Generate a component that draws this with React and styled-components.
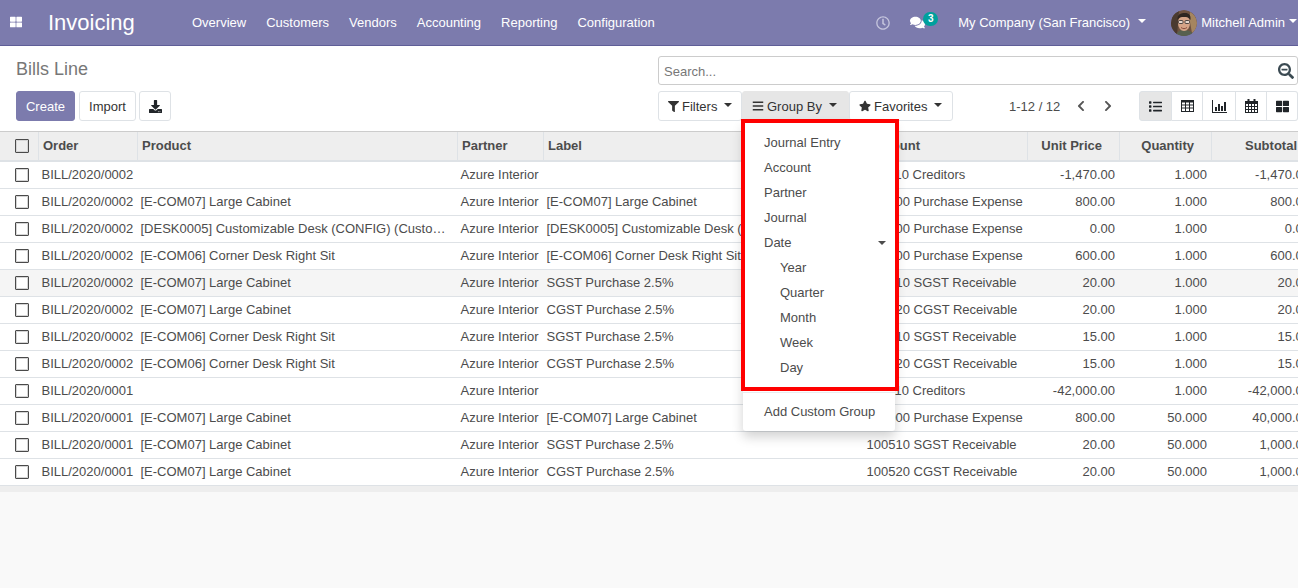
import React from "react";
import styled, { createGlobalStyle } from "styled-components";
import {
  FaThLarge,
  FaRegClock,
  FaComments,
  FaDownload,
  FaSearchMinus,
  FaFilter,
  FaBars,
  FaStar,
  FaChevronLeft,
  FaChevronRight,
  FaList,
} from "react-icons/fa";

const navLinks = ["Overview", "Customers", "Vendors", "Accounting", "Reporting", "Configuration"];
const dateOptions = ["Year", "Quarter", "Month", "Week", "Day"];

const columns = [
  { key: "check", width: 38 },
  { key: "order", width: 99, label: "Order" },
  { key: "product", width: 320, label: "Product" },
  { key: "partner", width: 86, label: "Partner" },
  { key: "label", width: 320, label: "Label" },
  { key: "account", width: 164, label: "Account" },
  { key: "price", width: 92, label: "Unit Price", right: true },
  { key: "qty", width: 92, label: "Quantity", right: true },
  { key: "subtotal", width: 103, label: "Subtotal", right: true },
];

const CABINET = "[E-COM07] Large Cabinet";
const DESK = "[DESK0005] Customizable Desk (CONFIG) (Custom, White)";
const CORNER = "[E-COM06] Corner Desk Right Sit";

const rows = [
  ["BILL/2020/0002", "", "", "211010 Creditors", "-1,470.00", "1.000", "-1,470.00"],
  ["BILL/2020/0002", CABINET, CABINET, "600000 Purchase Expense", "800.00", "1.000", "800.00"],
  ["BILL/2020/0002", DESK, DESK, "600000 Purchase Expense", "0.00", "1.000", "0.00"],
  ["BILL/2020/0002", CORNER, CORNER, "600000 Purchase Expense", "600.00", "1.000", "600.00"],
  ["BILL/2020/0002", CABINET, "SGST Purchase 2.5%", "100510 SGST Receivable", "20.00", "1.000", "20.00"],
  ["BILL/2020/0002", CABINET, "CGST Purchase 2.5%", "100520 CGST Receivable", "20.00", "1.000", "20.00"],
  ["BILL/2020/0002", CORNER, "SGST Purchase 2.5%", "100510 SGST Receivable", "15.00", "1.000", "15.00"],
  ["BILL/2020/0002", CORNER, "CGST Purchase 2.5%", "100520 CGST Receivable", "15.00", "1.000", "15.00"],
  ["BILL/2020/0001", "", "", "211010 Creditors", "-42,000.00", "1.000", "-42,000.00"],
  ["BILL/2020/0001", CABINET, CABINET, "600000 Purchase Expense", "800.00", "50.000", "40,000.00"],
  ["BILL/2020/0001", CABINET, "SGST Purchase 2.5%", "100510 SGST Receivable", "20.00", "50.000", "1,000.00"],
  ["BILL/2020/0001", CABINET, "CGST Purchase 2.5%", "100520 CGST Receivable", "20.00", "50.000", "1,000.00"],
];

const Avatar = () => (
  <AvatarFrame viewBox="0 0 26 26">
    <circle cx="13" cy="13" r="13" fill="#6f5240" />
    <path d="M0 13A13 13 0 0 1 8 1L6 26A13 13 0 0 1 0 13Z" fill="#4a3a30" />
    <path d="M19 2A13 13 0 0 1 26 13A13 13 0 0 1 21 23L19 12Z" fill="#a5855f" />
    <path d="M5 26c1-5 4-6 8-6s7 1 9 4a13 13 0 0 1-17 2Z" fill="#57604f" />
    <ellipse cx="13" cy="13" rx="6" ry="8" fill="#d6a488" />
    <path d="M6.500 10C6 4 10 3 14 3s6 2 5.500 7C18 7.500 16 7 13 7s-5 .5-6.500 3Z" fill="#2f2621" />
    <rect x="7.500" y="10.500" width="4.500" height="3" rx="1" fill="#e8d8ce" stroke="#2c2a2a" strokeWidth=".8" />
    <rect x="14" y="10.500" width="4.500" height="3" rx="1" fill="#e8d8ce" stroke="#2c2a2a" strokeWidth=".8" />
    <path d="M10 17.500c2 1.500 4 1.500 6 0" fill="none" stroke="#8c4f3f" strokeWidth="1" />
  </AvatarFrame>
);

const TableIcon = () => (
  <svg width="13" height="12" viewBox="0 0 13 12" fill="none" stroke="#212529">
    <rect x=".5" y=".5" width="12" height="11" />
    <rect x="0" y="0" width="13" height="2.500" fill="#212529" stroke="none" />
    <path d="M0 5h13M0 8h13M4.500 2v9M8.500 2v9" />
  </svg>
);

const ChartIcon = () => (
  <svg width="15" height="13" viewBox="0 0 15 13" fill="#212529">
    <rect x="0" y="0" width="1" height="13" />
    <rect x="0" y="12" width="15" height="1" />
    <rect x="3" y="7" width="2" height="4" />
    <rect x="6" y="4" width="2" height="7" />
    <rect x="9" y="6" width="2" height="5" />
    <rect x="12" y="2" width="2" height="9" />
  </svg>
);

const CalendarIcon = () => (
  <svg width="13" height="14" viewBox="0 0 13 14" fill="none" stroke="#212529">
    <rect x=".5" y="2.500" width="12" height="11" />
    <rect x="0" y="2" width="13" height="3" fill="#212529" stroke="none" />
    <rect x="2.500" y="0" width="2" height="3.500" fill="#212529" stroke="none" />
    <rect x="8.500" y="0" width="2" height="3.500" fill="#212529" stroke="none" />
    <path d="M0 7.500h13M0 10.500h13M3.500 5v8M6.500 5v8M9.500 5v8" />
  </svg>
);

const App = () => {
  return (
    <Page>
      <GlobalStyle />
      <Navbar>
        <AppsButton>
          <FaThLarge size={12} />
        </AppsButton>
        <Brand>Invoicing</Brand>
        <NavMenu>
          {navLinks.map((link) => (
            <NavLink key={link}>{link}</NavLink>
          ))}
        </NavMenu>
        <NavRight>
          <ClockItem>
            <FaRegClock size={14} />
          </ClockItem>
          <MessagesItem>
            <FaComments size={15} />
            <Badge>3</Badge>
          </MessagesItem>
          <CompanyItem>
            My Company (San Francisco)
            <Caret $light />
          </CompanyItem>
          <UserItem>
            <Avatar />
            Mitchell Admin
            <Caret $light />
          </UserItem>
        </NavRight>
      </Navbar>

      <ControlPanel>
        <PanelLeft>
          <Title>Bills Line</Title>
          <ButtonRow>
            <PrimaryButton>Create</PrimaryButton>
            <PlainButton>Import</PlainButton>
            <IconButton>
              <FaDownload size={13} />
            </IconButton>
          </ButtonRow>
        </PanelLeft>
        <PanelRight>
          <SearchBar>
            <SearchInput placeholder="Search..." />
            <SearchIcon>
              <FaSearchMinus size={16} />
            </SearchIcon>
          </SearchBar>
          <OptionsRow>
            <FilterGroup>
              <FilterButton $width={84}>
                <FaFilter size={11} />
                Filters
                <Caret />
              </FilterButton>
              <GroupByWrap>
                <FilterButton $active $width={107}>
                  <FaBars size={12} />
                  Group By
                  <Caret />
                </FilterButton>
                <Dropdown>
                  <MenuItem>Journal Entry</MenuItem>
                  <MenuItem>Account</MenuItem>
                  <MenuItem>Partner</MenuItem>
                  <MenuItem>Journal</MenuItem>
                  <MenuItem>
                    Date
                    <MenuCaret />
                  </MenuItem>
                  {dateOptions.map((option) => (
                    <MenuItem key={option} $sub>
                      {option}
                    </MenuItem>
                  ))}
                  <MenuDivider />
                  <MenuItem>Add Custom Group</MenuItem>
                  <RedFrame />
                </Dropdown>
              </GroupByWrap>
              <FilterButton $width={104}>
                <FaStar size={12} />
                Favorites
                <Caret />
              </FilterButton>
            </FilterGroup>
            <Pager>
              <PagerText>1-12 / 12</PagerText>
              <PagerArrow>
                <FaChevronLeft size={12} />
              </PagerArrow>
              <PagerArrow>
                <FaChevronRight size={12} />
              </PagerArrow>
            </Pager>
            <ViewSwitcher>
              <ViewButton $active $width={33}>
                <FaList size={13} />
              </ViewButton>
              <ViewButton $width={31}>
                <TableIcon />
              </ViewButton>
              <ViewButton $width={33}>
                <ChartIcon />
              </ViewButton>
              <ViewButton $width={31}>
                <CalendarIcon />
              </ViewButton>
              <ViewButton $width={31}>
                <FaThLarge size={13} />
              </ViewButton>
            </ViewSwitcher>
          </OptionsRow>
        </PanelRight>
      </ControlPanel>

      <TableWrap>
        <BillsTable>
          <colgroup>
            {columns.map((col) => (
              <col key={col.key} width={col.width} />
            ))}
          </colgroup>
          <thead>
            <tr>
              <HeadCheck>
                <CheckBox $head />
              </HeadCheck>
              {columns.slice(1).map((col) => (
                <HeadCell key={col.key} $right={col.right}>
                  {col.label}
                </HeadCell>
              ))}
            </tr>
          </thead>
          <tbody>
            {rows.map((row, key) => (
              <BodyRow key={key} $hover={key === 4}>
                <CheckCell>
                  <CheckBox />
                </CheckCell>
                <Cell>{row[0]}</Cell>
                <Cell>{row[1]}</Cell>
                <Cell>Azure Interior</Cell>
                <Cell>{row[2]}</Cell>
                <Cell>{row[3]}</Cell>
                <Cell $right>{row[4]}</Cell>
                <Cell $right>{row[5]}</Cell>
                <Cell $right>{row[6]}</Cell>
              </BodyRow>
            ))}
          </tbody>
        </BillsTable>
        <TableFooter />
      </TableWrap>
    </Page>
  );
};

export default App;

const GlobalStyle = createGlobalStyle`
  html, body {
    margin: 0;
    height: 100%;
    overflow: hidden;
    background: #f9f9f9;
  }
  * {
    box-sizing: border-box;
  }
`;

const Page = styled.div`
  min-height: 588px;
  font-family: "Liberation Sans", Arial, sans-serif;
  font-size: 13px;
  color: #4c4c4c;
  background: #f9f9f9;
  overflow: hidden;
`;

const Navbar = styled.header`
  display: flex;
  align-items: center;
  height: 46px;
  background: #7c7bad;
  border-bottom: 1px solid #5f5e97;
  color: #fff;
`;

const AppsButton = styled.div`
  display: flex;
  width: 48px;
  padding-left: 10px;
  padding-bottom: 2px;
`;

const Brand = styled.div`
  width: 134px;
  font-size: 22px;
  line-height: 44px;
`;

const NavMenu = styled.nav`
  display: flex;
  gap: 20px;
  padding-left: 10px;
`;

const NavLink = styled.a`
  color: #fff;
`;

const NavRight = styled.div`
  display: flex;
  align-items: center;
  margin-left: auto;
  height: 100%;
`;

const ClockItem = styled.div`
  display: flex;
  color: #c5c5dd;
  margin-right: 20px;
`;

const MessagesItem = styled.div`
  position: relative;
  display: flex;
  width: 48px;
`;

const Badge = styled.span`
  position: absolute;
  top: -3px;
  left: 13px;
  width: 15px;
  height: 14px;
  border-radius: 8px;
  background: #00a09d;
  font-size: 10px;
  font-weight: bold;
  line-height: 14px;
  text-align: center;
`;

const CompanyItem = styled.div`
  display: flex;
  align-items: center;
  gap: 8px;
  margin-right: 25px;
`;

const UserItem = styled.div`
  display: flex;
  align-items: center;
  gap: 4px;
  margin-right: 1px;
`;

const AvatarFrame = styled.svg`
  width: 26px;
  height: 26px;
  border-radius: 50%;
`;

const Caret = styled.span`
  display: inline-block;
  width: 0;
  height: 0;
  margin-top: -3px;
  border-top: 4px solid ${(p) => (p.$light ? "#fff" : "#333")};
  border-left: 4px solid transparent;
  border-right: 4px solid transparent;
`;

const ControlPanel = styled.section`
  display: flex;
  height: 86px;
  background: #fff;
  border-bottom: 1px solid #ccc;
`;

const PanelLeft = styled.div`
  width: 658px;
  padding: 12px 0 0 16px;
`;

const Title = styled.h1`
  margin: 0 0 11px;
  font-size: 18px;
  font-weight: normal;
  line-height: 22px;
  color: #777;
`;

const ButtonRow = styled.div`
  display: flex;
`;

const PlainButton = styled.button`
  height: 30px;
  width: 57px;
  margin-left: 4px;
  padding: 0;
  border: 1px solid #dee2e6;
  border-radius: 3px;
  background: #fff;
  color: #333;
  font: 13px "Liberation Sans", Arial, sans-serif;
`;

const PrimaryButton = styled(PlainButton)`
  width: 59px;
  margin-left: 0;
  background: #7c7bad;
  border-color: #7c7bad;
  color: #fff;
`;

const IconButton = styled(PlainButton)`
  display: flex;
  align-items: center;
  justify-content: center;
  width: 32px;
  margin-left: 3px;
  color: #212529;
`;

const PanelRight = styled.div`
  flex: 1;
  padding-top: 10px;
`;

const SearchBar = styled.div`
  display: flex;
  align-items: center;
  height: 29px;
  border: 1px solid #ccc;
  border-radius: 3px;
`;

const SearchInput = styled.input`
  flex: 1;
  min-width: 0;
  height: 100%;
  padding: 1px 5px 0;
  border: 0;
  outline: 0;
  background: transparent;
  font: 13px "Liberation Sans", Arial, sans-serif;
  &::placeholder {
    color: #777;
  }
`;

const SearchIcon = styled.span`
  display: flex;
  padding: 1px 3px 0 0;
  color: #3b4a52;
`;

const OptionsRow = styled.div`
  display: flex;
  align-items: center;
  margin-top: 6px;
`;

const FilterGroup = styled.div`
  display: flex;
  width: 351px;
`;

const GroupByWrap = styled.div`
  position: relative;
`;

const FilterButton = styled.button`
  display: flex;
  align-items: center;
  gap: 3px;
  width: ${(p) => p.$width}px;
  height: 30px;
  padding: 0 0 0 9px;
  border: 1px solid ${(p) => (p.$active ? "#e6e6e6" : "#dee2e6")};
  border-radius: 3px;
  background: ${(p) => (p.$active ? "#e6e6e6" : "#fff")};
  color: #333;
  font: 13px "Liberation Sans", Arial, sans-serif;
  & > span {
    margin-left: 4px;
  }
`;

const Dropdown = styled.div`
  position: absolute;
  z-index: 5;
  top: 100%;
  left: 1px;
  width: 152px;
  height: 310px;
  padding-top: 9px;
  background: #fff;
  border-radius: 0 0 3px 3px;
  box-shadow: 0 6px 12px rgba(0, 0, 0, 0.18);
`;

const MenuItem = styled.div`
  position: relative;
  height: 25px;
  padding-left: ${(p) => (p.$sub ? "37px" : "21px")};
  line-height: 25px;
  color: #4c4c4c;
`;

const MenuCaret = styled.span`
  position: absolute;
  top: 11px;
  right: 9px;
  border-top: 4px solid #4c4c4c;
  border-left: 4px solid transparent;
  border-right: 4px solid transparent;
`;

const MenuDivider = styled.div`
  height: 1px;
  margin: 12px 0 6px;
  background: #e9ecef;
`;

const RedFrame = styled.div`
  position: absolute;
  top: -2px;
  left: -2px;
  width: 158px;
  height: 272px;
  border: 4px solid #f00;
  pointer-events: none;
`;

const Pager = styled.div`
  display: flex;
  align-items: center;
  width: 130px;
`;

const PagerText = styled.span`
  width: 66px;
  color: #4c4c4c;
`;

const PagerArrow = styled.span`
  display: flex;
  width: 27px;
  color: #555;
`;

const ViewSwitcher = styled.div`
  display: flex;
  margin-left: auto;
  width: 159px;
  border-radius: 3px 0 0 3px;
`;

const ViewButton = styled.button`
  display: flex;
  align-items: center;
  justify-content: center;
  width: ${(p) => p.$width}px;
  height: 30px;
  padding: 0;
  border: 1px solid #dee2e6;
  border-left-width: ${(p) => (p.$active ? "1px" : "0")};
  background: ${(p) => (p.$active ? "#e6e6e6" : "#fff")};
  color: #212529;
  &:first-child {
    border-radius: 3px 0 0 3px;
  }
  &:last-child {
    border-radius: 0 3px 3px 0;
  }
`;

const TableWrap = styled.section`
  overflow: hidden;
`;

const BillsTable = styled.table`
  width: 1314px;
  table-layout: fixed;
  border-collapse: separate;
  border-spacing: 0;
  background: #fff;
`;

const HeadCheck = styled.th`
  height: 30px;
  padding: 0;
  background: #eee;
  border-bottom: 2px solid #dee2e6;
  text-align: center;
`;

const HeadCell = styled.th`
  height: 30px;
  padding: 0 ${(p) => (p.$right ? "17px" : "4px")} 2px 4px;
  overflow: hidden;
  white-space: nowrap;
  background: #eee;
  border-left: 1px solid #dee2e6;
  border-bottom: 2px solid #dee2e6;
  color: #4c4c4c;
  font-weight: bold;
  text-align: ${(p) => (p.$right ? "right" : "left")};
`;

const BodyRow = styled.tr`
  background: ${(p) => (p.$hover ? "#f5f5f5" : "#fff")};
`;

const Cell = styled.td`
  height: 27px;
  padding: 0 ${(p) => (p.$right ? "4px" : "1px")} 2px 3.5px;
  overflow: hidden;
  white-space: nowrap;
  text-overflow: ellipsis;
  border-bottom: 1px solid #dee2e6;
  text-align: ${(p) => (p.$right ? "right" : "left")};
`;

const CheckCell = styled.td`
  height: 27px;
  padding: 0;
  border-bottom: 1px solid #dee2e6;
  text-align: center;
`;

const CheckBox = styled.span`
  display: block;
  width: 14px;
  height: 14px;
  margin: 0 auto 0 15px;
  border: 1px solid #4a4a4a;
  border-radius: 1px;
  background: ${(p) => (p.$head ? "#eee" : "#fff")};
  box-shadow: inset 0 0 0 1px #d5d5d5;
`;

const TableFooter = styled.div`
  height: 6px;
  background: #eee;
`;
